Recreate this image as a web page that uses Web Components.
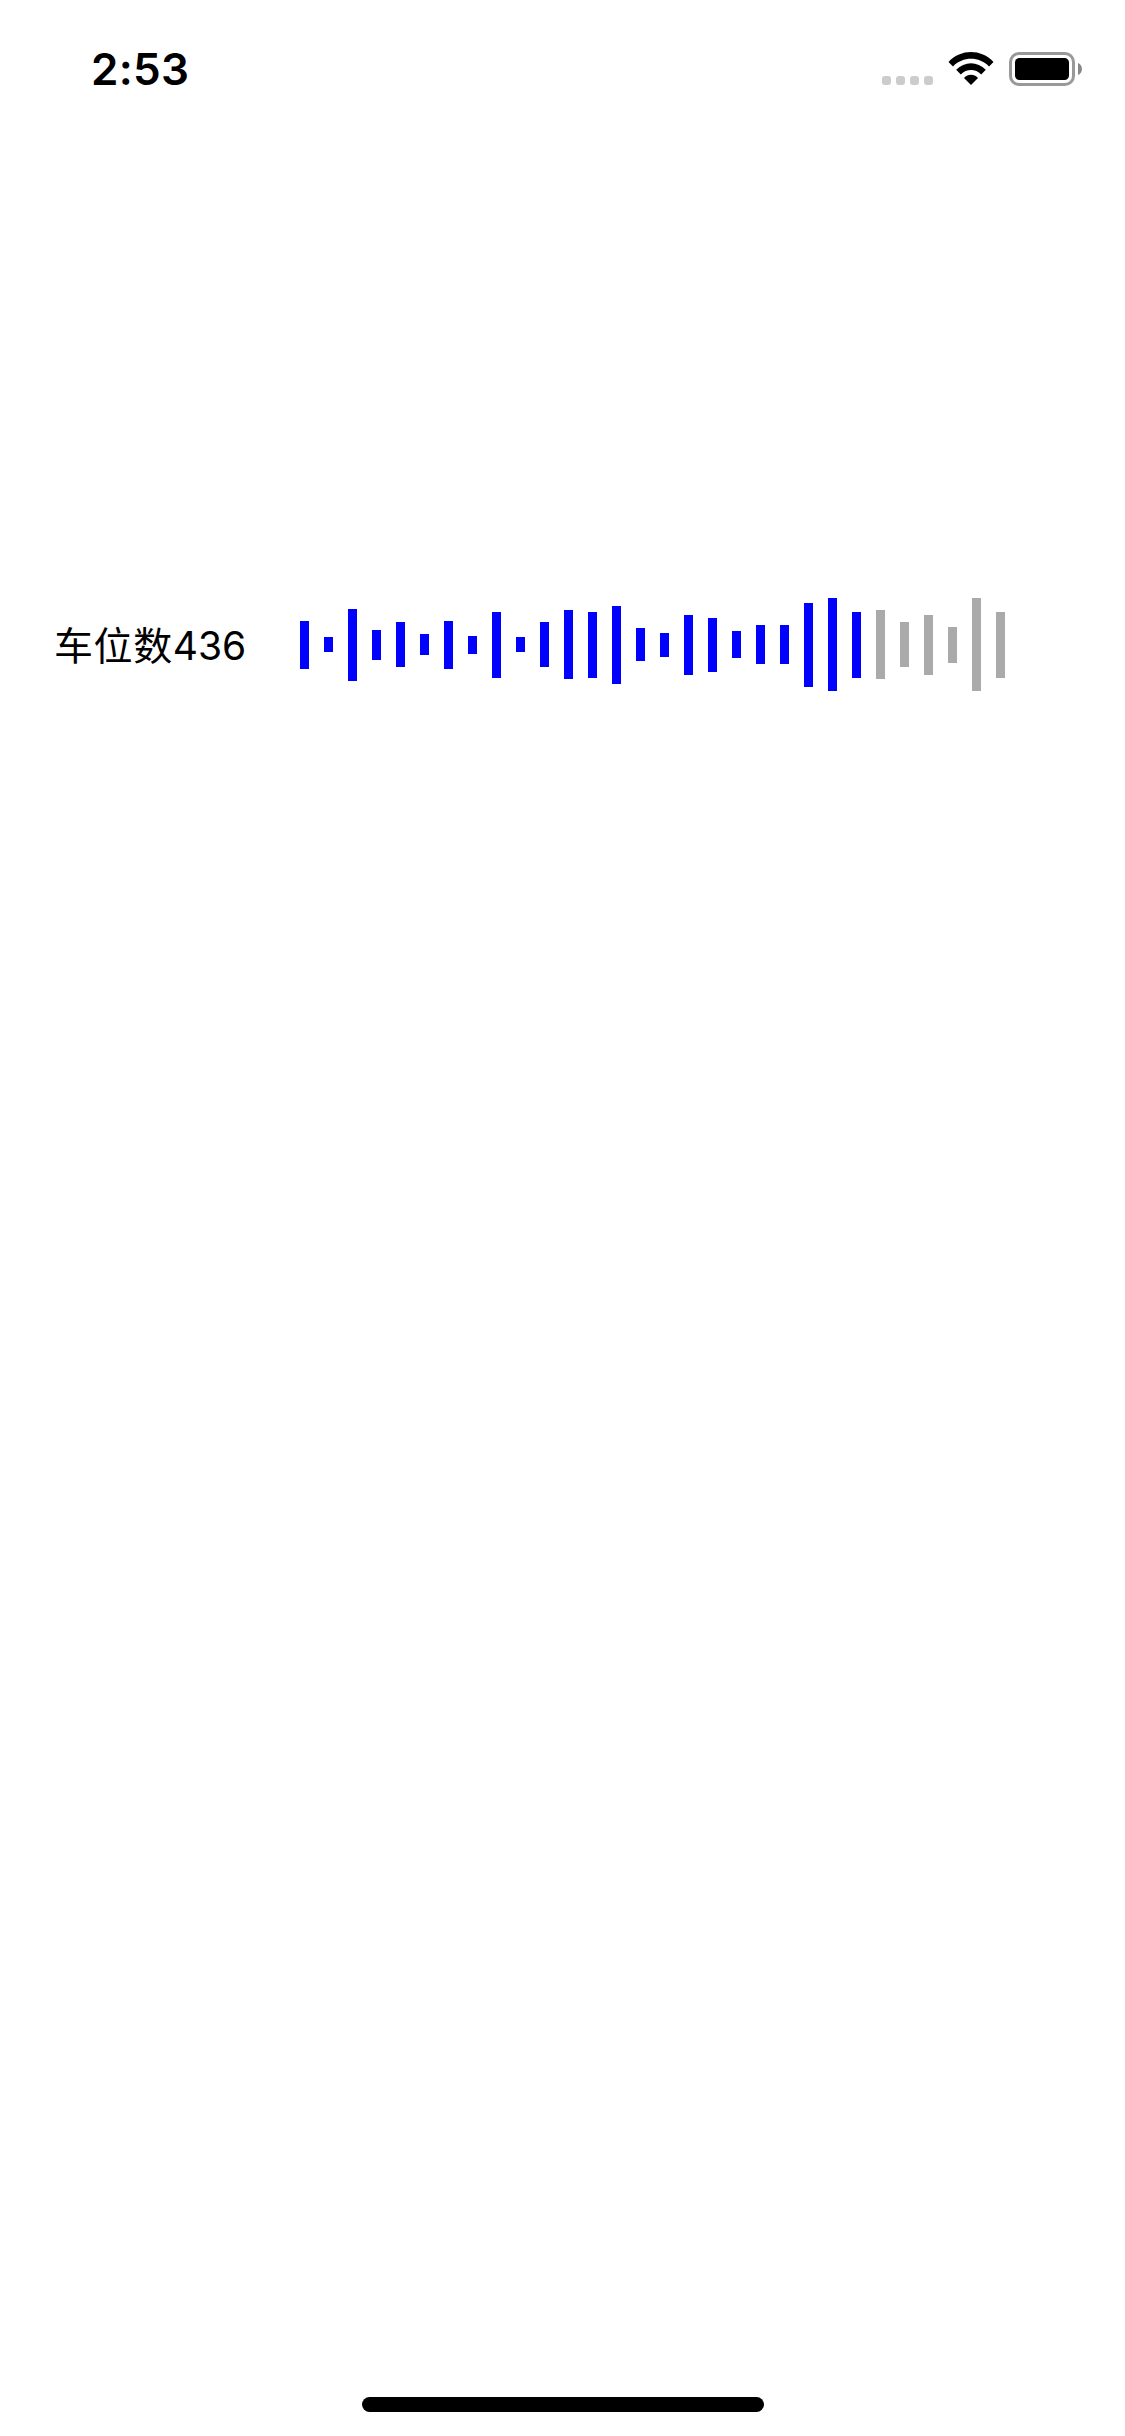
<!DOCTYPE html>
<html lang="zh-CN">
<head>
<meta charset="utf-8">
<title>车位数</title>
<style>
html, body { margin: 0; background: #fff; }
.n { letter-spacing: -0.1px; }
</style>
</head>
<body>
<phone-screen>
  <status-bar slot="status" time="2:53"></status-bar>
  <wave-row>
    <span slot="label">车位数<span class="n">436</span></span>
    <wave-form played="24" levels="48 15 72 30 45 21 48 18 66 15 45 69 66 78 33 24 60 54 27 39 39 84 93 66 69 45 60 36 93 66"></wave-form>
  </wave-row>
  <home-indicator slot="home"></home-indicator>
</phone-screen>
<script>
class PhoneScreen extends HTMLElement {
  constructor() {
    super();
    this.attachShadow({ mode: "open" }).innerHTML = `
      <style>
        :host { display: flex; flex-direction: column; width: 1125px; height: 2436px; background: #fff; color: #000;
          font-family: Inter, "Noto Sans CJK SC", sans-serif; overflow: hidden; }
        main { flex: 1; padding-top: 462.75px; }
      </style>
      <slot name="status"></slot><main><slot></slot></main><slot name="home"></slot>`;
  }
}
class StatusBar extends HTMLElement {
  constructor() {
    super();
    this.attachShadow({ mode: "open" }).innerHTML = `
      <style>
        :host { display: flex; justify-content: space-between; align-items: flex-start; height: 132px;
          box-sizing: border-box; padding: 39px 43px 0 91px; }
        .time { font-size: 44px; line-height: 60px; font-weight: 600; letter-spacing: 0.3px; display: flex; }
        .icons { display: flex; align-items: flex-end; height: 47px; }
        svg { display: block; }
        .dots { display: flex; gap: 5px; margin: 0 15px 1px 0; }
        .dots i { width: 9px; height: 9px; border-radius: 3px; background: #ccc; }
        .battery { margin-left: 15px; }
      </style>
      <div class="time"></div>
      <div class="icons">
        <div class="dots"><i></i><i></i><i></i><i></i></div>
        <svg class="wifi" width="46" height="34" viewBox="0 0 46 34">
          <path d="M.5 9.9C13 -3.3 33 -3.3 45.5 9.9L41 14.5C31 4.3 15 4.3 5 14.5Z"/>
          <path d="M8.2 17.8C16.5 9 29.5 9 37.8 17.8L33.2 22.4C27.5 16.5 18.5 16.5 12.8 22.4Z"/>
          <path d="M16 25.9C20 21.7 26 21.7 30 25.9L23 33Z"/>
        </svg>
        <svg class="battery" width="73" height="34" viewBox="0 0 73 34">
          <rect x="1.5" y="1.5" width="63" height="31" rx="8.5" fill="none" stroke="#999" stroke-width="3"/>
          <rect x="6" y="6" width="54" height="22" rx="4.5"/>
          <path d="M69 11C74.3 13 74.3 21 69 23Z" fill="#888"/>
        </svg>
      </div>`;
  }
  connectedCallback() {
    this.shadowRoot.querySelector(".time").textContent = this.getAttribute("time");
  }
}
class WaveRow extends HTMLElement {
  constructor() {
    super();
    this.attachShadow({ mode: "open" }).innerHTML = `
      <style>
        :host { display: flex; align-items: center; height: 100px; padding-left: 54px; }
        .label { width: 246px; padding-top: 2px; font-size: 39px; line-height: 60px; font-weight: 300; letter-spacing: 0.6px; white-space: nowrap; }
        ::slotted(span) { font-weight: 400; }
      </style>
      <div class="label"><slot name="label"></slot></div><slot></slot>`;
  }
}
class WaveForm extends HTMLElement {
  constructor() {
    super();
    this.attachShadow({ mode: "open" }).innerHTML = `
      <style>
        :host { display: flex; align-items: center; gap: 15px; height: 100px; }
        i { width: 9px; background: #aaa; }
        i.on { background: #00f; }
      </style>`;
  }
  connectedCallback() {
    const played = Number(this.getAttribute("played"));
    this.getAttribute("levels").split(" ").forEach((level, index) => {
      const bar = document.createElement("i");
      bar.style.height = level + "px";
      if (index < played) bar.className = "on";
      this.shadowRoot.append(bar);
    });
  }
}
class HomeIndicator extends HTMLElement {
  constructor() {
    super();
    this.attachShadow({ mode: "open" }).innerHTML = `
      <style>
        :host { display: flex; justify-content: center; padding: 0 0 24px 1px; }
        div { width: 402px; height: 15px; border-radius: 7.5px; background: #000; }
      </style><div></div>`;
  }
}
customElements.define("phone-screen", PhoneScreen);
customElements.define("status-bar", StatusBar);
customElements.define("wave-row", WaveRow);
customElements.define("wave-form", WaveForm);
customElements.define("home-indicator", HomeIndicator);
</script>
</body>
</html>
